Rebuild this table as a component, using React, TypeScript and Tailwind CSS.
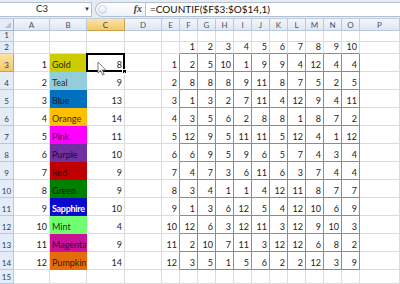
const ROWS = [
  { n: 1, name: "Gold", fill: "bg-[#cccc00] border-[#cccc00]", ink: "text-[#2b2b00]", count: 8, data: [2, 5, 10, 1, 9, 9, 4, 12, 4, 4] },
  { n: 2, name: "Teal", fill: "bg-[#92cddc] border-[#92cddc]", ink: "text-[#1c2b30]", count: 9, data: [8, 8, 8, 9, 11, 8, 7, 5, 2, 5] },
  { n: 3, name: "Blue", fill: "bg-[#0070c0] border-[#0070c0]", ink: "text-[#0a1a33]", count: 13, data: [1, 3, 2, 7, 11, 4, 12, 9, 4, 11] },
  { n: 4, name: "Orange", fill: "bg-[#ffc000] border-[#ffc000]", ink: "text-[#3a2a00]", count: 14, data: [3, 5, 6, 2, 8, 8, 1, 8, 7, 2] },
  { n: 5, name: "Pink", fill: "bg-[#ff00ff] border-[#ff00ff]", ink: "text-[#4a004a]", count: 11, data: [12, 9, 5, 11, 11, 5, 12, 4, 1, 12] },
  { n: 6, name: "Purple", fill: "bg-[#7030a0] border-[#7030a0]", ink: "text-[#1e0a2e]", count: 10, data: [6, 9, 5, 9, 6, 5, 7, 4, 3, 4] },
  { n: 7, name: "Red", fill: "bg-[#c00000] border-[#c00000]", ink: "text-[#3a0000]", count: 9, data: [4, 7, 3, 6, 11, 6, 3, 7, 4, 4] },
  { n: 8, name: "Green", fill: "bg-[#008000] border-[#008000]", ink: "text-[#002200]", count: 9, data: [3, 4, 1, 1, 4, 12, 11, 8, 7, 7] },
  { n: 9, name: "Sapphire", fill: "bg-[#0a0acc] border-[#0a0acc]", ink: "text-white font-bold tracking-[-0.3px]", count: 10, data: [1, 3, 6, 12, 5, 4, 12, 10, 6, 9] },
  { n: 10, name: "Mint", fill: "bg-[#70ff70] border-[#70ff70]", ink: "text-[#103a10]", count: 4, data: [12, 6, 3, 12, 11, 3, 12, 9, 10, 3] },
  { n: 11, name: "Magenta", fill: "bg-[#cc1199] border-[#cc1199]", ink: "text-[#3a0030]", count: 9, data: [2, 10, 7, 11, 3, 12, 12, 6, 8, 2] },
  { n: 12, name: "Pumpkin", fill: "bg-[#e46c0a] border-[#e46c0a]", ink: "text-[#3a1a00]", count: 14, data: [3, 5, 1, 5, 6, 2, 2, 12, 3, 9] },
];

const COLS = ["A", "B", "C", "D", "E", "F", "G", "H", "I", "J", "K", "L", "M", "N", "O", "P"];

const grid = "border-r border-b border-[#dadcdd]";
const num = "flex items-end justify-end pr-[2px] pb-[2px]";
const box = "border-r border-b border-[#8c8c8c]";

function RowHead({ n, active }: { n: number; active?: boolean }) {
  return (
    <div
      className={`flex items-end justify-center pb-[2px] border-r border-b text-[8px] text-[#2c3e55] ${
        active
          ? "bg-gradient-to-b from-[#fbe3a8] to-[#f5c866] border-[#c9a24f]"
          : "bg-[#e4ecf7] border-[#b9c9dd]"
      }`}
    >
      {n}
    </div>
  );
}

function Cursor() {
  return (
    <svg className="absolute left-[97px] top-[61px]" width="10" height="15" viewBox="0 0 10 15">
      <path d="M1 1 L1 12 L3.6 9.6 L5.6 14 L7.2 13.3 L5.3 9 L8.8 9 Z" fill="#ffffff" stroke="#6f6f6f" strokeWidth="0.9" strokeLinejoin="round" />
    </svg>
  );
}

export default function App() {
  return (
    <div className="relative w-[400px] h-[284px] overflow-hidden bg-white font-['Lato','Liberation_Sans',sans-serif] text-[9px] leading-none text-[#222]">
      {/* formula bar */}
      <div className="flex items-center h-[19px] bg-[#e6ebf2] border-b border-[#c3cddb]">
        <div className="relative flex items-center w-[92px] h-[15px] bg-white border border-l-0 border-[#b3c0d2]">
          <span className="w-[84px] text-center text-[9.5px] text-[#222]">C3</span>
          <span className="text-[6px] text-[#333]">▼</span>
        </div>
        <div className="ml-[3px] flex items-center justify-between w-[50px] h-[15px] pl-[2px] pr-[3px] rounded-l-full border border-r-0 border-[#b3c0d2] bg-gradient-to-b from-white to-[#eef2f7]">
          <span className="w-[9px] h-[9px] rounded-full border border-[#c4cfdd] bg-gradient-to-b from-white to-[#e1e8f1]" />
          <span className="font-['Liberation_Serif',serif] italic font-bold text-[10px] text-[#444]">fx</span>
        </div>
        <div className="flex items-center flex-1 h-[15px] pl-[4px] bg-white border border-r-0 border-[#b3c0d2] text-[10px] text-[#111]">
          =COUNTIF($F$3:$O$14,1)
        </div>
      </div>

      {/* sheet */}
      <div className="grid grid-cols-[14px_36px_37px_38px_37px_18px_repeat(10,18px)_40px] grid-rows-[12px_11px_12px_repeat(12,18px)_14px]">
        {/* column headers */}
        <div className="relative bg-[#e4ecf7] border-r border-b border-[#9fb4cc]">
          <span className="absolute right-[2px] bottom-[2px] w-0 h-0 border-l-[6px] border-l-transparent border-b-[6px] border-b-[#b7c4d4]" />
        </div>
        {COLS.map((c) => (
          <div
            key={c}
            className={`flex items-center justify-center border-r border-b text-[8px] ${
              c === "C"
                ? "bg-gradient-to-b from-[#fbe3a8] to-[#f5c866] border-[#c9a24f] text-[#3b3b3b]"
                : "bg-gradient-to-b from-[#f3f6fb] to-[#dfe7f2] border-[#b9c9dd] text-[#44546a]"
            }`}
          >
            {c}
          </div>
        ))}

        {/* row 1 */}
        <RowHead n={1} />
        {COLS.map((c) => (
          <div key={c} className={grid} />
        ))}

        {/* row 2 */}
        <RowHead n={2} />
        {COLS.map((c, i) => {
          if (i >= 5 && i <= 14) {
            return (
              <div key={c} className={`${num} border-r border-b border-r-[#dadcdd] border-b-[#8c8c8c]`}>
                {i - 4}
              </div>
            );
          }
          return <div key={c} className={grid} />;
        })}

        {/* data rows */}
        {ROWS.map((r, idx) => (
          <div key={r.n} className="contents">
            <RowHead n={idx + 3} active={idx === 0} />
            <div className={`${grid} ${num}`}>{r.n}</div>
            <div className={`flex items-end pl-[2px] pb-[2px] overflow-hidden whitespace-nowrap border-b border-r ${r.fill} ${r.ink}`}>{r.name}</div>
            <div className={`relative ${grid} ${num}`}>
              {r.count}
              {idx === 0 && (
                <>
                  <span className="absolute -left-[1px] -top-[1px] -right-[1px] -bottom-[1px] border-2 border-black" />
                  <span className="absolute -right-[3px] -bottom-[3px] w-[5px] h-[5px] bg-black border border-white" />
                </>
              )}
            </div>
            <div className={grid} />
            <div className={`${num} border-b border-r border-b-[#dadcdd] border-r-[#8c8c8c]`}>{r.n}</div>
            {r.data.map((v, j) => (
              <div key={j} className={`${box} ${num}`}>
                {v}
              </div>
            ))}
            <div className={grid} />
          </div>
        ))}

        {/* row 15 */}
        <RowHead n={15} />
        {COLS.map((c) => (
          <div key={c} className={grid} />
        ))}
      </div>

      <Cursor />
    </div>
  );
}
